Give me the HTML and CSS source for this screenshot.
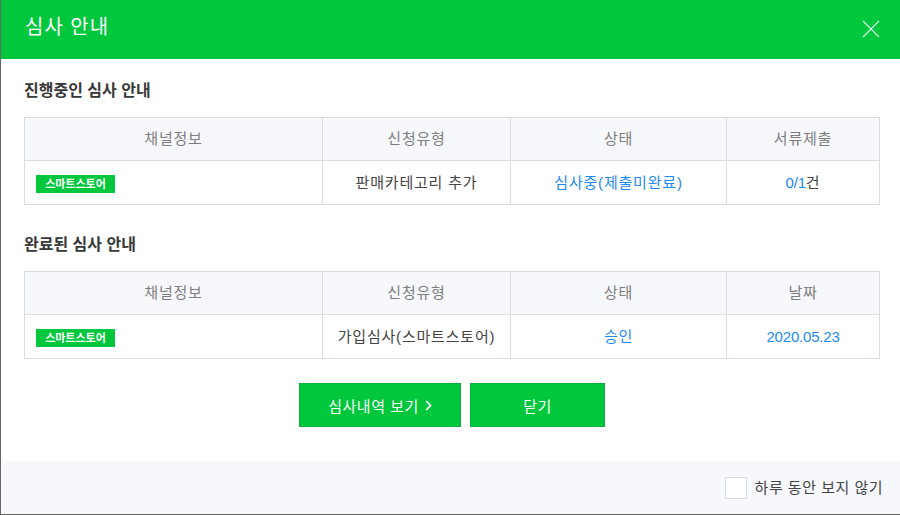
FILE: index.html
```html
<!DOCTYPE html>
<html lang="ko">
<head>
<meta charset="utf-8">
<title>심사 안내</title>
<link rel="stylesheet" href="styles.css">
</head>
<body>
<div class="dialog">
  <header class="dlg-head">
    <h1 class="dlg-title">심사 안내</h1>
    <button class="close" type="button" aria-label="닫기">
      <svg width="18" height="18" viewBox="0 0 18 18"><path d="M1 1 L17 17 M17 1 L1 17" stroke="#ffffff" stroke-width="1.2" stroke-opacity="0.85" fill="none"/></svg>
    </button>
  </header>

  <main class="dlg-body">
    <section class="sec">
      <h2 class="sec-title">진행중인 심사 안내</h2>
      <table class="grid">
        <colgroup><col class="c1"><col class="c2"><col class="c3"><col class="c4"></colgroup>
        <thead>
          <tr><th>채널정보</th><th>신청유형</th><th>상태</th><th>서류제출</th></tr>
        </thead>
        <tbody>
          <tr>
            <td class="chan"><span class="badge">스마트스토어</span></td>
            <td>판매카테고리 추가</td>
            <td class="blue">심사중(제출미완료)</td>
            <td><span class="blue num">0/1</span>건</td>
          </tr>
        </tbody>
      </table>
    </section>

    <section class="sec sec-2">
      <h2 class="sec-title">완료된 심사 안내</h2>
      <table class="grid">
        <colgroup><col class="c1"><col class="c2"><col class="c3"><col class="c4"></colgroup>
        <thead>
          <tr><th>채널정보</th><th>신청유형</th><th>상태</th><th>날짜</th></tr>
        </thead>
        <tbody>
          <tr>
            <td class="chan"><span class="badge">스마트스토어</span></td>
            <td>가입심사(스마트스토어)</td>
            <td class="blue">승인</td>
            <td class="blue num">2020.05.23</td>
          </tr>
        </tbody>
      </table>
    </section>

    <div class="actions">
      <button class="btn btn-wide" type="button">심사내역 보기
        <svg width="7" height="11" viewBox="0 0 7 11"><path d="M1.2 1 L5.5 5.5 L1.2 10" stroke="#ffffff" stroke-width="1.8" fill="none"/></svg>
      </button>
      <button class="btn btn-close" type="button">닫기</button>
    </div>
  </main>

  <footer class="dlg-foot">
    <label class="check"><span class="box"></span><span class="check-label">하루 동안 보지 않기</span></label>
  </footer>
</div>
</body>
</html>
```

FILE: styles.css
```css
html, body {
  margin: 0;
  padding: 0;
}
body {
  width: 900px;
  height: 515px;
  background: #666769;
  overflow: hidden;
  font-family: "Liberation Sans", "Noto Sans CJK KR", sans-serif;
  font-size: 14px;
  color: #333333;
}
.dialog {
  margin-left: 1px;
  width: 899px;
  height: 514px;
  background: #ffffff;
  display: flex;
  flex-direction: column;
}
.dlg-head {
  height: 59px;
  box-sizing: border-box;
  background: #00c73c;
  display: flex;
  align-items: flex-start;
  justify-content: space-between;
  padding: 15px 20px 0 24px;
}
.dlg-title {
  margin: 0;
  font-size: 20px;
  font-weight: normal;
  line-height: 24px;
  letter-spacing: 1px;
  color: #ffffff;
}
.close {
  margin-top: 5px;
  padding: 0;
  border: 0;
  background: transparent;
  width: 18px;
  height: 18px;
  display: block;
}
.close svg { display: block; }

.dlg-body {
  flex: 1;
  padding: 20px 20px 0 23px;
}
.sec-title {
  margin: 0 0 14px;
  font-size: 16px;
  font-weight: bold;
  line-height: 24px;
  color: #383838;
}
.sec-2 { margin-top: 28px; }

.grid {
  width: 855px;
  border-collapse: collapse;
  table-layout: fixed;
}
.c1 { width: 298px; }
.c2 { width: 188px; }
.c3 { width: 216px; }
.c4 { width: 153px; }
.grid th, .grid td {
  border: 1px solid #dcdde3;
  text-align: center;
  vertical-align: middle;
  font-size: 15px;
  letter-spacing: 0.8px;
  line-height: 20px;
  padding: 0;
}
.grid th {
  height: 42px;
  background: #f7f8fc;
  font-weight: normal;
  color: #7d7d7d;
}
.grid td {
  height: 43px;
  color: #444444;
}
.grid td.chan {
  text-align: left;
  padding-left: 11px;
}
.blue { color: #1d8bf1; }
.grid td.blue { color: #1d8bf1; }
.grid .num { letter-spacing: -0.2px; }
.badge {
  display: inline-block;
  height: 18px;
  line-height: 18px;
  padding: 0 6px;
  width: 67px;
  text-align: center;
  background: #00c73c;
  color: #ffffff;
  font-size: 11px;
  letter-spacing: 0;
  font-weight: bold;
  vertical-align: middle;
}

.actions {
  margin-top: 24px;
  display: flex;
  justify-content: center;
  gap: 9px;
}
.btn {
  height: 44px;
  box-sizing: border-box;
  border: 1px solid #0bb23d;
  background: #00c73c;
  color: #ffffff;
  font-family: "Liberation Sans", "Noto Sans CJK KR", sans-serif;
  font-size: 15px;
  letter-spacing: 0.5px;
  padding: 0;
  display: flex;
  align-items: center;
  justify-content: center;
  gap: 6px;
}
.btn-wide { width: 162px; }
.btn-close { width: 135px; }
.btn svg { display: block; margin-top: 1px; }

.dlg-foot {
  height: 53px;
  background: #f7f8fc;
  display: flex;
  align-items: center;
  justify-content: flex-end;
  padding-right: 17px;
}
.check {
  display: flex;
  align-items: center;
  gap: 8px;
}
.box {
  width: 20px;
  height: 20px;
  border: 1px solid #dcdde3;
  background: #ffffff;
  display: block;
}
.check-label {
  font-size: 15px;
  letter-spacing: 0.5px;
  line-height: 20px;
  color: #444444;
}
```
